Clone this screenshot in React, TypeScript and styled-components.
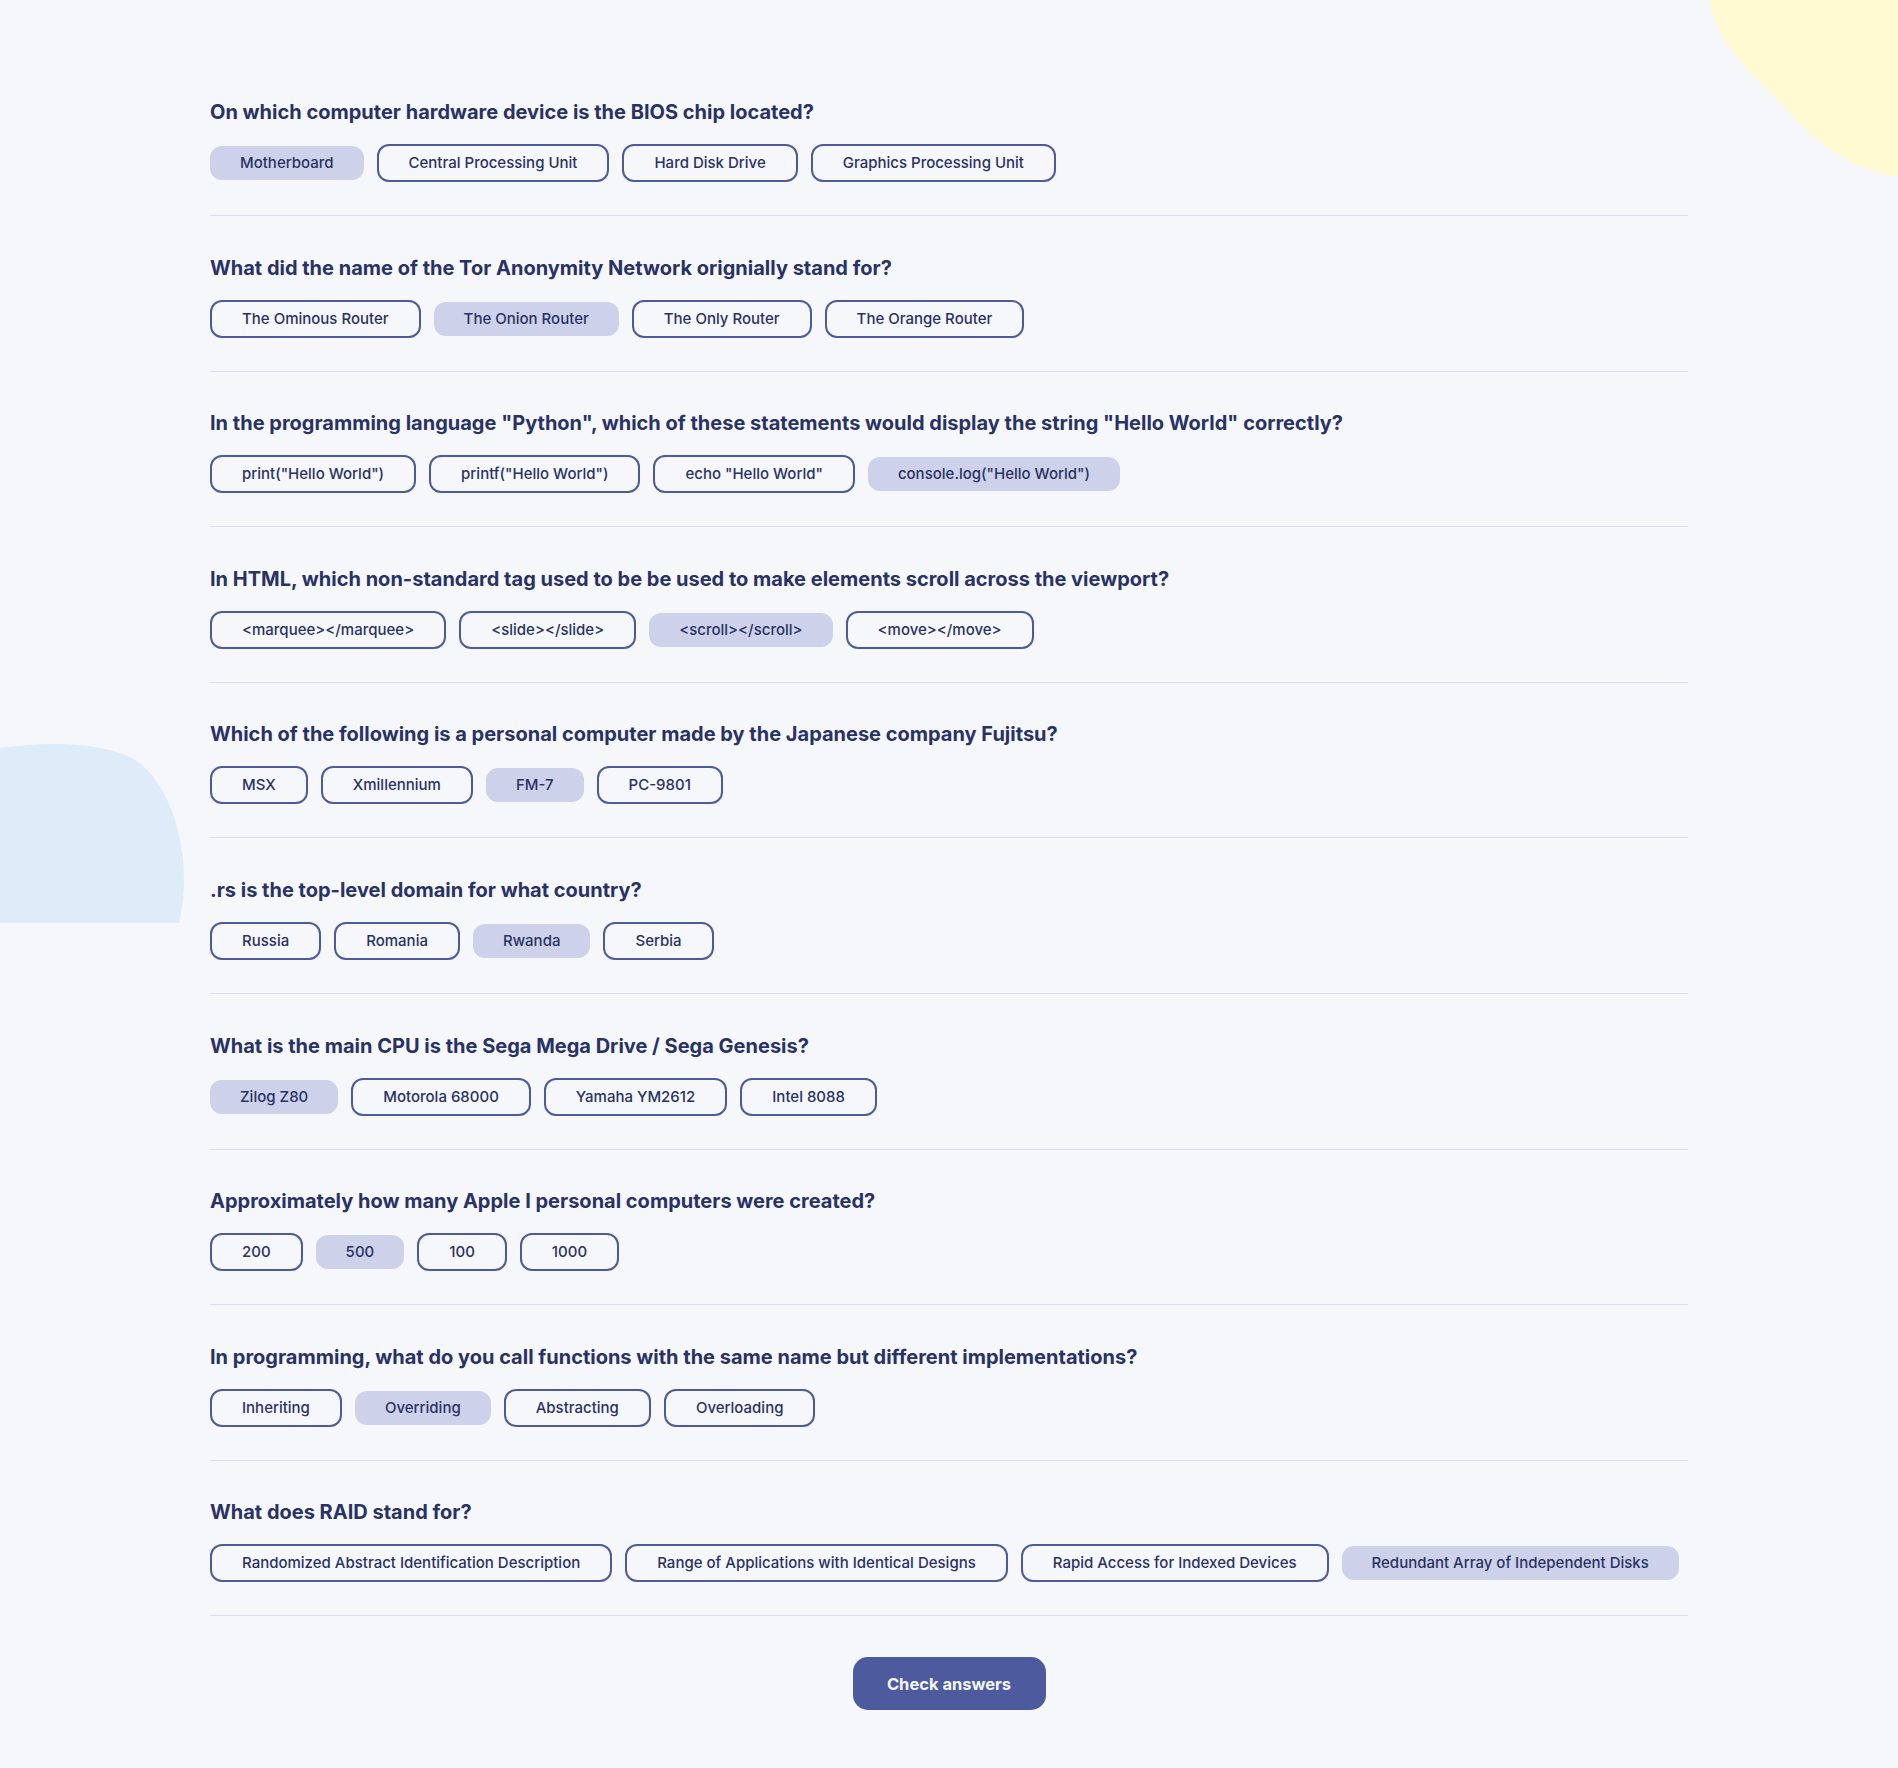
import React from "react";
import styled, { createGlobalStyle } from "styled-components";

const GlobalStyle = createGlobalStyle`
  html, body {
    margin: 0;
    padding: 0;
    background: #f5f7fb;
  }
  body {
    font-family: Inter, "Noto Sans", sans-serif;
    color: #293264;
  }
  * { box-sizing: border-box; }
`;

const Page = styled.div`
  position: relative;
  min-height: 1768px;
  overflow: hidden;
  background: #f5f7fb;
  padding: 100px 0 60px;
`;

const Blob = styled.svg`
  position: absolute;
  top: 0;
  left: 0;
  width: 1898px;
  height: 1768px;
  pointer-events: none;
  z-index: 0;
`;

const Quiz = styled.main`
  position: relative;
  z-index: 1;
  width: 1478px;
  margin: 0 auto;
  display: flex;
  flex-direction: column;
`;

const QuestionBlock = styled.section`
  display: flex;
  flex-direction: column;
  gap: 20px;
  padding-bottom: 33px;
  border-bottom: 1px solid #dbdef0;
  margin-bottom: 39.6px;
`;

const Title = styled.h2`
  margin: 0;
  font-size: 20px;
  line-height: 24px;
  font-weight: 700;
  color: #293264;
`;

const AnswerRow = styled.div`
  display: flex;
  align-items: center;
  gap: 13px;
  min-height: 38px;
`;

const Answer = styled.button<{ $selected?: boolean }>`
  font-family: Inter, "Noto Sans", sans-serif;
  font-size: 15px;
  line-height: 18px;
  font-weight: 500;
  color: #293264;
  white-space: nowrap;
  padding: 8px 30px;
  border-radius: 12px;
  cursor: pointer;
  background: ${(p) => (p.$selected ? "#cdd2ea" : "transparent")};
  border: ${(p) => (p.$selected ? "none" : "2px solid #4d5b9e")};
`;

const Footer = styled.div`
  display: flex;
  justify-content: center;
  padding-top: 1.4px;
`;

const CheckButton = styled.button`
  width: 193px;
  height: 53px;
  border: none;
  border-radius: 15px;
  background: #4d5b9e;
  color: #f5f7fb;
  font-family: Inter, "Noto Sans", sans-serif;
  font-size: 16.5px;
  font-weight: 700;
  cursor: pointer;
`;

const questions: { q: string; a: string[]; sel: number }[] = [
  {
    q: "On which computer hardware device is the BIOS chip located?",
    a: ["Motherboard", "Central Processing Unit", "Hard Disk Drive", "Graphics Processing Unit"],
    sel: 0,
  },
  {
    q: "What did the name of the Tor Anonymity Network orignially stand for?",
    a: ["The Ominous Router", "The Onion Router", "The Only Router", "The Orange Router"],
    sel: 1,
  },
  {
    q: 'In the programming language "Python", which of these statements would display the string "Hello World" correctly?',
    a: ['print("Hello World")', 'printf("Hello World")', 'echo "Hello World"', 'console.log("Hello World")'],
    sel: 3,
  },
  {
    q: "In HTML, which non-standard tag used to be be used to make elements scroll across the viewport?",
    a: ["<marquee></marquee>", "<slide></slide>", "<scroll></scroll>", "<move></move>"],
    sel: 2,
  },
  {
    q: "Which of the following is a personal computer made by the Japanese company Fujitsu?",
    a: ["MSX", "Xmillennium", "FM-7", "PC-9801"],
    sel: 2,
  },
  {
    q: ".rs is the top-level domain for what country?",
    a: ["Russia", "Romania", "Rwanda", "Serbia"],
    sel: 2,
  },
  {
    q: "What is the main CPU is the Sega Mega Drive / Sega Genesis?",
    a: ["Zilog Z80", "Motorola 68000", "Yamaha YM2612", "Intel 8088"],
    sel: 0,
  },
  {
    q: "Approximately how many Apple I personal computers were created?",
    a: ["200", "500", "100", "1000"],
    sel: 1,
  },
  {
    q: "In programming, what do you call functions with the same name but different implementations?",
    a: ["Inheriting", "Overriding", "Abstracting", "Overloading"],
    sel: 1,
  },
  {
    q: "What does RAID stand for?",
    a: [
      "Randomized Abstract Identification Description",
      "Range of Applications with Identical Designs",
      "Rapid Access for Indexed Devices",
      "Redundant Array of Independent Disks",
    ],
    sel: 3,
  },
];

export default function App() {
  return (
    <>
      <GlobalStyle />
      <Page>
        <Blob viewBox="0 0 1898 1768" aria-hidden="true">
          <path
            d="M1710 0 C1714 35 1740 62 1770 92 C1800 122 1830 165 1898 177 L1898 0 Z"
            fill="#fffad1"
          />
          <path
            d="M0 748 C40 743 90 740 130 757 C165 775 184 830 184 880 C184 900 181 912 179 923 L0 923 Z"
            fill="#deebf8"
          />
        </Blob>
        <Quiz>
          {questions.map((item, i) => (
            <QuestionBlock key={i}>
              <Title>{item.q}</Title>
              <AnswerRow>
                {item.a.map((ans, j) => (
                  <Answer key={j} $selected={j === item.sel}>
                    {ans}
                  </Answer>
                ))}
              </AnswerRow>
            </QuestionBlock>
          ))}
          <Footer>
            <CheckButton>Check answers</CheckButton>
          </Footer>
        </Quiz>
      </Page>
    </>
  );
}
